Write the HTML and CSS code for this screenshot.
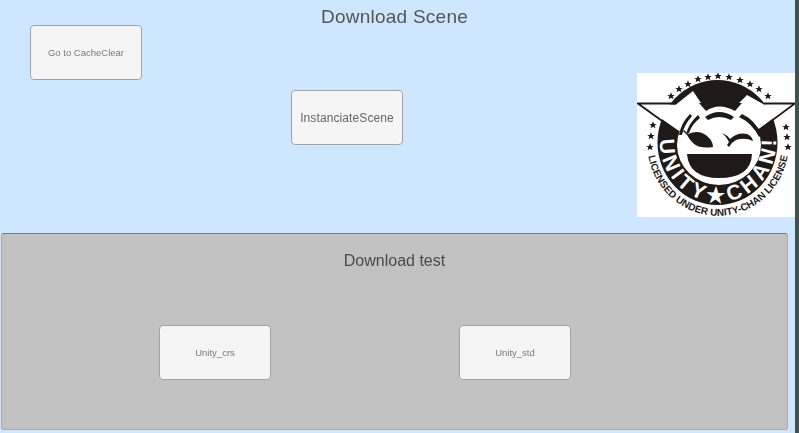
FILE: index.html
```html
<!DOCTYPE html>
<html lang="en">
<head>
  <meta charset="UTF-8">
  <meta name="viewport" content="width=device-width, initial-scale=1">
  <title>Download Scene</title>
  <link rel="stylesheet" href="styles.css">
</head>
<body>
  <div class="screen">
    <main class="canvas">
      <section class="top">
        <h1 class="heading">Download Scene</h1>
        <button class="btn btn-cache small">Go to CacheClear</button>
        <button class="btn btn-scene">InstanciateScene</button>
        <svg class="logo" viewBox="0 0 158 144" width="158" height="144">
          <defs>
            <polygon id="star" points="0,-3.8 1.1,-1.1 3.8,-1.1 1.7,0.6 2.4,3.3 0,1.7 -2.4,3.3 -1.7,0.6 -3.8,-1.1 -1.1,-1.1"/>
            <path id="ring-path" d="M26 50 A58 60 0 1 0 136 50"/>
            <path id="license-path" d="M12.5 50 A71 73.5 0 1 0 149.5 50"/>
          </defs>
          <rect width="158" height="144" fill="#fff"/>
          <g fill="#1f1a17">
            <use href="#star" x="34" y="23"/>
            <use href="#star" x="42" y="16"/>
            <use href="#star" x="51" y="11"/>
            <use href="#star" x="61" y="6"/>
            <use href="#star" x="71" y="4"/>
            <use href="#star" x="81" y="3"/>
            <use href="#star" x="92" y="4"/>
            <use href="#star" x="103" y="7"/>
            <use href="#star" x="113" y="11"/>
            <use href="#star" x="122" y="16"/>
            <use href="#star" x="131" y="23"/>
            <use href="#star" x="16" y="52"/>
            <use href="#star" x="14" y="63"/>
            <use href="#star" x="13" y="74"/>
            <use href="#star" x="149" y="54"/>
            <use href="#star" x="150" y="64"/>
            <use href="#star" x="151" y="74"/>
            <ellipse cx="80.5" cy="69.5" rx="60" ry="62.5"/>
          </g>
          <ellipse cx="82" cy="72" rx="42" ry="40" fill="#fff"/>
          <polygon fill="#fff" points="4,31.5 39,31.5 56,18 68,36 60,50 42,58"/>
          <polygon fill="#fff" points="155,31.5 127,31.5 110,22 96,36 105,50 122,56"/>
          <g fill="none" stroke="#1f1a17" stroke-width="1.8">
            <polyline points="39,30.5 1,30.5 39,58"/>
            <polyline points="127,30.5 158,30.5 122,57"/>
          </g>
          <g fill="#1f1a17">
            <path d="M62 30 L69 38 Q82 29 98 38 L105 30 Z"/>
            <path d="M68 44 Q82 34 97 44 L94 47 Q82 41 71 47 Z"/>
            <path d="M53 41 Q44 50 42 62 L45 62 Q47 52 55 43 Z"/>
            <path d="M61 42 Q52 50 49 61 L52 60 Q55 51 63 45 Z"/>
            <path d="M102 44 Q115 50 122 64 L125 62 Q118 47 105 41 Z"/>
            <path d="M47 57 L51 61 Q62 56 70 63 Q76 68 76 74 Q62 76 56 70 Q52 66 50 62 L46 58 Z"/>
            <path d="M85 60 Q90 62 93 66 Q101 59 110 61 Q115 63 116 68 Q108 64 99 67 Q95 69 92 74 L90 72 L92 69 Q90 64 85 60 Z"/>
            <path d="M50 81 L115 81 Q114 105 82 105 Q52 105 50 81 Z"/>
          </g>
          <text class="ring-text"><textPath href="#ring-path" startOffset="50%" text-anchor="middle" textLength="190">UNITY★CHAN!</textPath></text>
          <text class="license-text"><textPath href="#license-path" startOffset="50%" text-anchor="middle" textLength="199">LICENSED UNDER UNITY-CHAN LICENSE</textPath></text>
        </svg>
      </section>
      <section class="panel">
        <h2 class="panel-title">Download test</h2>
        <div class="panel-row">
          <button class="btn small">Unity_crs</button>
          <button class="btn small">Unity_std</button>
        </div>
      </section>
    </main>
    <div class="edge"></div>
  </div>
</body>
</html>
```

FILE: styles.css
```css
html, body {
  margin: 0;
  padding: 0;
  overflow: hidden;
}
body {
  font-family: "Liberation Sans", Arial, sans-serif;
  color: #555;
}
.screen {
  display: flex;
  width: 799px;
  height: 433px;
  background: #cfe7fe;
}
.canvas {
  width: 795px;
}
.edge {
  width: 4px;
  background: #3f524d;
}
.top {
  display: grid;
  grid-template-columns: 30px 112px 149px 111px 235px 158px;
  height: 233px;
}
.heading {
  grid-column: 1 / -1;
  grid-row: 1;
  margin: 6px 6px 0 0;
  font-size: 19px;
  font-weight: normal;
  line-height: 21px;
  letter-spacing: 0.25px;
  text-align: center;
  filter: blur(0.3px);
}
.btn {
  width: 112px;
  height: 55px;
  padding: 0;
  background: #f5f5f5;
  border: 1px solid #a3a3a3;
  border-radius: 4px;
  font-family: inherit;
  font-size: 12px;
  letter-spacing: 0.1px;
  color: #666;
  filter: blur(0.35px);
}
.small {
  font-size: 9.5px;
  letter-spacing: 0;
  color: #7a7a7a;
}
.btn-cache {
  grid-column: 2;
  grid-row: 1;
  margin-top: 25px;
}
.btn-scene {
  grid-column: 4;
  grid-row: 1;
  margin-top: 90px;
}
.logo {
  grid-column: 6;
  grid-row: 1;
  margin-top: 73px;
  display: block;
}
.ring-text {
  font-size: 21px;
  font-weight: bold;
  fill: #fff;
}
.license-text {
  font-size: 10px;
  font-weight: bold;
  fill: #1f1a17;
}
.panel {
  margin: 0 7px 0 1px;
  height: 197px;
  box-sizing: border-box;
  background: #c2c2c2;
  border: 1px solid #a9a9a9;
  border-top-color: #777;
  border-radius: 3px;
}
.panel-title {
  margin: 18px 0 0;
  font-size: 16px;
  font-weight: normal;
  line-height: 18px;
  text-align: center;
  color: #4a4a4a;
  filter: blur(0.3px);
}
.panel-row {
  display: flex;
  gap: 188px;
  margin-top: 55px;
  padding-left: 157px;
}
```
